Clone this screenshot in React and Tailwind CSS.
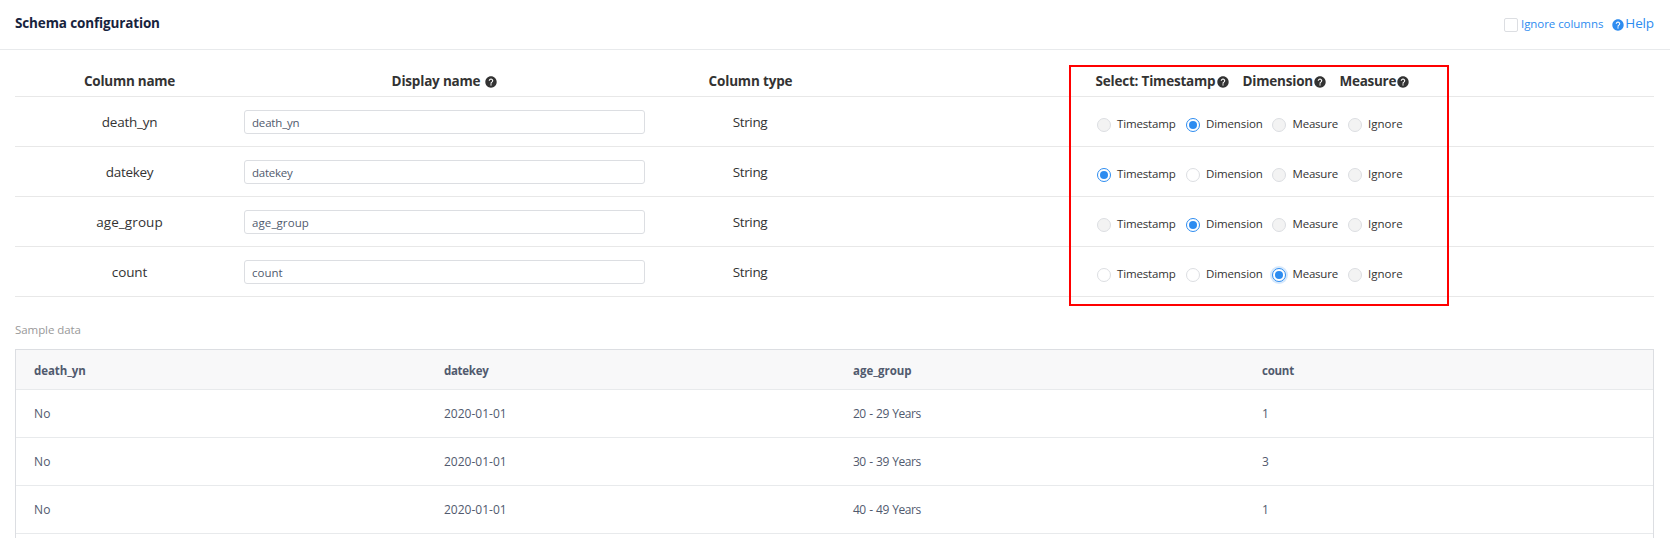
import { IoMdHelpCircle } from "react-icons/io";

const columns = [
  {
    name: "death_yn",
    nameClass: "tracking-[-0.26px]",
    inputClass: "tracking-[-0.18px]",
    states: ["disabled", "checked", "disabled", "disabled"],
  },
  {
    name: "datekey",
    nameClass: "tracking-[-0.3px]",
    inputClass: "tracking-[-0.25px]",
    states: ["checked", "empty", "disabled", "disabled"],
  },
  {
    name: "age_group",
    nameClass: "tracking-[0.1px]",
    inputClass: "tracking-[0.1px]",
    states: ["disabled", "checked", "disabled", "disabled"],
  },
  {
    name: "count",
    nameClass: "tracking-[-0.1px]",
    inputClass: "",
    states: ["empty", "empty", "focused", "disabled"],
  },
];

const options = [
  { label: "Timestamp", box: "w-[89px]", text: "tracking-[-0.15px]" },
  { label: "Dimension", box: "w-[86px]", text: "tracking-[-0.12px]" },
  { label: "Measure", box: "w-[76px]", text: "ml-[0.5px] tracking-[-0.2px]" },
  { label: "Ignore", box: "w-[60px]", text: "" },
];

const radioStyles = {
  disabled: "border-[#dcdee2] bg-[#f3f3f3]",
  empty: "border-[#dcdee2] bg-white",
  checked: "border-[#2d8cf0] bg-white",
  focused: "border-[#2d8cf0] bg-white ring-2 ring-[#2d8cf0]/20",
};

const sampleColumns = [
  { label: "death_yn", cls: "tracking-[-0.08px]" },
  { label: "datekey", cls: "tracking-[-0.3px]" },
  { label: "age_group", cls: "" },
  { label: "count", cls: "tracking-[-0.25px]" },
];

const sampleRows = [
  ["No", "2020-01-01", "20 - 29 Years", "1"],
  ["No", "2020-01-01", "30 - 39 Years", "3"],
  ["No", "2020-01-01", "40 - 49 Years", "1"],
];

const cellStyles = ["tracking-[0.3px]", "", "tracking-[-0.5px] [word-spacing:0.9px]", ""];

function Radio({ state }) {
  const on = state === "checked" || state === "focused";
  return (
    <span
      className={`mt-[2px] flex size-[14px] shrink-0 items-center justify-center rounded-full border ${radioStyles[state]}`}
    >
      {on && <span className="size-2 rounded-full bg-[#2d8cf0]" />}
    </span>
  );
}

function Help({ className = "" }) {
  return <IoMdHelpCircle size={14} className={`shrink-0 ${className}`} />;
}

function SchemaTable() {
  return (
    <section className="relative mr-4 ml-[15px] text-[13.5px] text-[#333]">
      <div className="grid h-[47px] grid-cols-[229px_401px_211px_1fr] items-center border-b border-[#e8e8e8] pt-[17px] font-bold">
        <div className="text-center tracking-[-0.26px]">Column name</div>
        <div className="flex items-center justify-center gap-1 pl-px tracking-[-0.19px]">
          <span>Display name</span>
          <Help />
        </div>
        <div className="text-center tracking-[-0.16px]">Column type</div>
        <div className="flex items-center pl-[239.5px]">
          <span className="flex w-[147px] items-center tracking-[-0.2px]">
            Select: Timestamp
            <Help className="ml-[0.5px]" />
          </span>
          <span className="flex w-[97px] items-center tracking-[-0.2px]">
            Dimension
            <Help />
          </span>
          <span className="flex items-center tracking-[-0.27px]">
            Measure
            <Help />
          </span>
        </div>
      </div>
      {columns.map((c) => (
        <div
          key={c.name}
          className="grid h-[50px] grid-cols-[229px_401px_211px_1fr] items-center border-b border-[#e8e8e8]"
        >
          <div className={`pt-px text-center ${c.nameClass}`}>{c.name}</div>
          <div
            className={`flex h-6 items-center rounded-[3px] border border-[#dcdee2] px-[7px] pt-[2px] text-[11.5px] text-[#515a6e] ${c.inputClass}`}
          >
            {c.name}
          </div>
          <div className="pt-px pr-px text-center tracking-[-0.36px]">String</div>
          <div className="flex items-center pt-[5px] pl-[241px] text-[11.5px]">
            {options.map((o, i) => (
              <label key={o.label} className={`flex items-center gap-1.5 ${o.box}`}>
                <Radio state={c.states[i]} />
                <span className={o.text}>{o.label}</span>
              </label>
            ))}
          </div>
        </div>
      ))}
      <div className="pointer-events-none absolute top-[15px] left-[1054px] h-[241px] w-[380px] border-2 border-[#ff0000]" />
    </section>
  );
}

function SampleTable() {
  return (
    <div className="mt-[10px] mr-4 ml-[15px] h-[200px] border border-[#dcdee2] text-[#515a6e]">
      <div className="grid h-10 grid-cols-[410px_409px_409px_1fr] items-center border-b border-[#e8eaec] bg-[#f8f8f9] pt-[3px] text-[11.5px] font-bold">
        {sampleColumns.map((c) => (
          <div key={c.label} className={`px-[18px] ${c.cls}`}>
            {c.label}
          </div>
        ))}
      </div>
      {sampleRows.map((row) => (
        <div
          key={row[2]}
          className="grid h-12 grid-cols-[410px_409px_409px_1fr] items-center border-b border-[#e8eaec] text-[12px]"
        >
          {row.map((v, i) => (
            <div key={i} className={`px-[18px] ${cellStyles[i]}`}>
              {v}
            </div>
          ))}
        </div>
      ))}
    </div>
  );
}

export default function App() {
  return (
    <main className="h-[538px] overflow-hidden bg-white font-['Open_Sans','Noto_Sans',sans-serif]">
      <header className="flex h-[50px] items-center justify-between border-b border-[#e8eaec] pr-4 pb-[3px] pl-[15px]">
        <h1 className="text-[13.5px] font-bold tracking-[-0.14px] text-[#17233d]">
          Schema configuration
        </h1>
        <div className="flex items-center text-[#2d8cf0]">
          <span className="mt-[3px] size-[14px] rounded-[2px] border border-[#dcdee2] bg-white" />
          <span className="mt-px ml-[3px] text-[11.5px] tracking-[-0.06px]">Ignore columns</span>
          <Help className="mt-[3px] ml-2" />
          <span className="text-[13.5px] tracking-[-0.13px]">Help</span>
        </div>
      </header>
      <SchemaTable />
      <div className="mt-[23px] ml-[15px] h-[19px] text-[11.5px] leading-[19px] tracking-[-0.07px] text-[#999]">
        Sample data
      </div>
      <SampleTable />
    </main>
  );
}
